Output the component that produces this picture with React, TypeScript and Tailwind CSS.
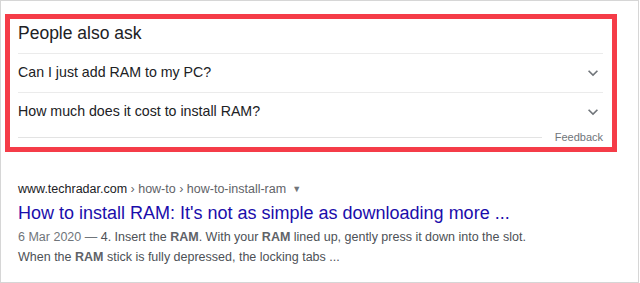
const questions = ['Can I just add RAM to my PC?', 'How much does it cost to install RAM?'];

function Expand() {
  return (
    <svg viewBox="0 0 24 24" className="w-5 h-5 fill-[#70757a]">
      <path d="M16.59 8.59L12 13.17 7.41 8.59 6 10l6 6 6-6z" />
    </svg>
  );
}

export default function App() {
  return (
    <div className="w-[640px] h-[283px] bg-white font-['Liberation_Sans',Arial,sans-serif]">
      <div className="w-[639px] h-[283px] border border-[#d6d6d6] pl-[4px] pt-[13px]">
        {/* People also ask */}
        <div className="w-[612px] h-[138px] border-[5px] border-[#f53c48] pl-[8px] pr-[9px]">
          <div className="text-[17.5px] leading-[28px] text-[#202124] pb-[6px] border-b border-[#ebebeb]">
            People also ask
          </div>
          {questions.map((q, idx) => (
            <div
              key={idx}
              className={`flex items-center justify-between text-[14.2px] text-[#202124] ${
                idx === 0 ? 'h-[39px] border-b border-[#ebebeb]' : 'h-[38px]'
              }`}
            >
              <span>{q}</span>
              <Expand />
            </div>
          ))}
          <div className="flex items-center h-[13px] gap-[13px]">
            <div className="flex-1 h-px bg-[#e3e3e3]" />
            <span className="text-[11px] leading-[13px] text-[#70757a]">Feedback</span>
          </div>
        </div>

        {/* Result */}
        <div className="mt-[28px] pl-[13px]">
          <div className="flex items-center h-[18px] text-[12.5px] leading-[18px]">
            <span className="text-[#202124]">www.techradar.com</span>
            <span className="text-[#5f6368]">&nbsp;› how-to › how-to-install-ram</span>
            <span className="ml-[6px] text-[#70757a] text-[9px]">▼</span>
          </div>
          <div className="mt-[3px] text-[18px] leading-[24px] text-[#1a0dab]">
            How to install RAM: It's not as simple as downloading more ...
          </div>
          <div className="mt-[3px] text-[12.5px] leading-[19.5px] text-[#4d5156]">
            <span className="text-[#70757a]">6 Mar 2020 — </span>4. Insert the <b className="text-[#5f6368]">RAM</b>. With
            your <b className="text-[#5f6368]">RAM</b> lined up, gently press it down into the slot.
            <br />
            When the <b className="text-[#5f6368]">RAM</b> stick is fully depressed, the locking tabs ...
          </div>
        </div>
      </div>
    </div>
  );
}
